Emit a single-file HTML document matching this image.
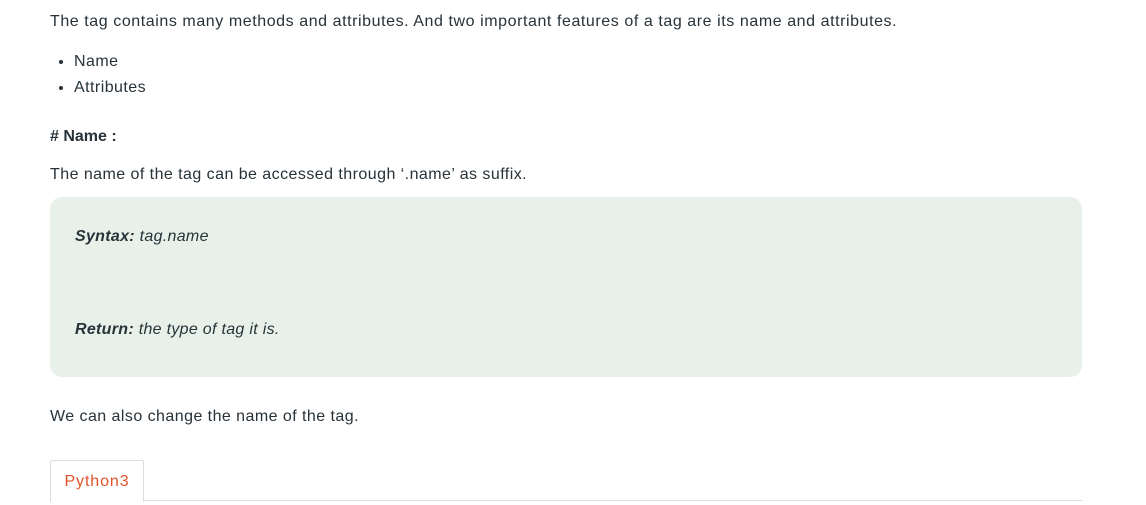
<!DOCTYPE html>
<html><head><style>
body{margin:0;background:#fff;font-family:"Liberation Sans",sans-serif;color:#273239;width:1146px;height:505px;overflow:hidden;position:relative}
.t{position:absolute;left:50px;font-size:16px;white-space:nowrap;letter-spacing:0.45px}
ul{position:absolute;left:50px;top:49px;margin:0;padding-left:24px;font-size:16px;line-height:26px;letter-spacing:0.45px}
.box{position:absolute;left:50px;top:197px;width:1032px;height:180px;background:#e7f1e9;border-radius:12px}
.box div{position:absolute;left:25px;font-size:16px;font-style:italic;letter-spacing:0.3px}
.tab{position:absolute;left:50px;top:460px;width:92px;height:41px;border:1px solid #ddd;border-bottom:none;background:#fff;color:#e0532a;font-size:16px;line-height:42px;text-align:center;border-radius:2px 2px 0 0;letter-spacing:0.9px}
.line{position:absolute;left:143px;top:500px;width:939px;border-top:1px solid #ddd}
</style></head><body>
<div class="t" style="top:13px;letter-spacing:0.57px">The tag contains many methods and attributes. And two important features of a tag are its name and attributes.</div>
<ul><li>Name</li><li>Attributes</li></ul>
<div class="t" style="top:128px;font-weight:bold;letter-spacing:0">#&nbsp;Name :</div>
<div class="t" style="top:166px">The name of the tag can be accessed through ‘.name’ as suffix.</div>
<div class="box"><div style="top:31px"><b>Syntax:</b> tag.name</div><div style="top:124px"><b>Return:</b> the type of tag it is.</div></div>
<div class="t" style="top:408px">We can also change the name of the tag.</div>
<div class="tab">Python3</div><div class="line"></div>
</body></html>
